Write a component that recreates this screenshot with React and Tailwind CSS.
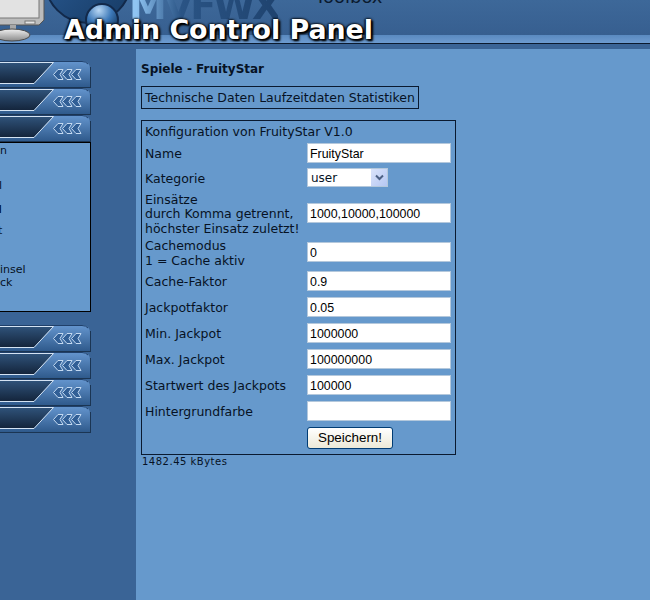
import React from 'react';

const rows = [
  { label: ['Name'], value: 'FruityStar', h: 'h-[24px]' },
  { label: ['Kategorie'], select: true, h: 'h-[25px]' },
  { label: ['Einsätze', 'durch Komma getrennt,', 'höchster Einsatz zuletzt!'], value: '1000,10000,100000', h: 'h-[46px]' },
  { label: ['Cachemodus', '1 = Cache aktiv'], value: '0', h: 'h-[32px]' },
  { label: ['Cache-Faktor'], value: '0.9', h: 'h-[26px]' },
  { label: ['Jackpotfaktor'], value: '0.05', h: 'h-[26px]' },
  { label: ['Min. Jackpot'], value: '1000000', h: 'h-[26px]' },
  { label: ['Max. Jackpot'], value: '100000000', h: 'h-[26px]' },
  { label: ['Startwert des Jackpots'], value: '100000', h: 'h-[26px]' },
  { label: ['Hintergrundfarbe'], value: '', h: 'h-[26px]' },
];

const Tab = () => (
  <svg width="91" height="27" viewBox="0 0 91 27" className="block">
    <defs>
      <linearGradient id="tabBody" x1="0" y1="0" x2="0" y2="1">
        <stop offset="0" stopColor="#6596cf" />
        <stop offset="1" stopColor="#2f5a8c" />
      </linearGradient>
      <linearGradient id="tabDark" x1="0" y1="0" x2="0" y2="1">
        <stop offset="0" stopColor="#2f5279" />
        <stop offset="1" stopColor="#14253c" />
      </linearGradient>
    </defs>
    <path d="M0 0H83Q90 1 90 8V26H0Z" fill="url(#tabBody)" />
    <path d="M0 0.5H82Q86 0.5 88 3" fill="none" stroke="#20406a" />
    <path d="M0 2H53L34 22H0Z" fill="url(#tabDark)" />
    <path d="M0 1.5H53.5L34 22.5H0" fill="none" stroke="#d4e3f3" />
    <path d="M0 26.5H91M90.5 6V27" stroke="#1b3553" />
    <g fill="#315f96" stroke="#c4daf2">
      <path d="M58 8.5H63L60 13.5L63 18.5H58L53.5 13.5Z" />
      <path d="M67 8.5H72L69 13.5L72 18.5H67L62.5 13.5Z" />
      <path d="M76 8.5H81L78 13.5L81 18.5H76L71.5 13.5Z" />
    </g>
  </svg>
);

const Logo = () => (
  <svg width="130" height="44" viewBox="0 0 130 44" className="block">
    <defs>
      <linearGradient id="big" x1="0" y1="0" x2="1" y2="1">
        <stop offset="0" stopColor="#2d5f9a" />
        <stop offset="1" stopColor="#163a63" />
      </linearGradient>
      <radialGradient id="small" cx="0.4" cy="0.2" r="0.8">
        <stop offset="0" stopColor="#b7d6f3" />
        <stop offset="0.5" stopColor="#3c78b8" />
        <stop offset="1" stopColor="#123256" />
      </radialGradient>
      <linearGradient id="stand" x1="0" y1="0" x2="0" y2="1">
        <stop offset="0" stopColor="#f1f1f1" />
        <stop offset="1" stopColor="#8a8a8a" />
      </linearGradient>
    </defs>
    <circle cx="88" cy="-20" r="43" fill="url(#big)" stroke="#12294a" strokeWidth="2" />
    <circle cx="102" cy="20" r="16" fill="url(#small)" stroke="#12294a" strokeWidth="2" />
    <path d="M-2 -2H44V20L39 25H-2Z" fill="#bcbcbc" stroke="#555" />
    <rect x="-2" y="-2" width="41" height="20" fill="#e2e2e2" stroke="#777" />
    <rect x="25" y="21" width="10" height="3" fill="#e5e5e5" stroke="#777" />
    <rect x="10" y="25" width="6" height="8" fill="#a8a8a8" />
    <ellipse cx="12" cy="35" rx="18" ry="6" fill="url(#stand)" stroke="#4a4a4a" />
  </svg>
);

export default function App() {
  return (
    <div className="w-[650px] h-[600px] overflow-hidden flex flex-col bg-[#3a6496] text-[#061224] font-['DejaVu_Sans',sans-serif] text-[12.5px]">
      {/* header */}
      <div className="relative h-[49px] shrink-0 bg-[#3a6496] overflow-hidden">
        <div className="h-[35px] bg-gradient-to-b from-[#3d6899] to-[#375f90]" />
        <div className="h-[8px] bg-gradient-to-b from-[#5a8ac0] to-[#6d9bd0]" />
        <div className="h-px bg-[#0b1a2e]" />
        <div className="absolute left-0 top-0"><Logo /></div>
        <div className="absolute left-[129px] top-[-13px] font-bold text-[38px] leading-[38px] tracking-[-3px] text-transparent bg-clip-text bg-gradient-to-r from-[#8fc4f2] from-[5%] via-[#2a5485] via-[35%] to-[#1f436f]">MVFWX</div>
        <div className="absolute left-[315px] top-[-12px] text-[18px] leading-[18px] text-[#0b1a2e]">Toolbox</div>
        <div className="absolute left-[64px] top-[14px] font-bold text-[26.8px] leading-[32px] text-white [text-shadow:0_0_3px_#000,1px_1px_3px_#000,2px_2px_2px_#000,-1px_0_2px_#000]">Admin Control Panel</div>
      </div>

      <div className="flex flex-1 min-h-0">
        {/* sidebar */}
        <div className="w-[136px] shrink-0 pt-[12px] overflow-hidden">
          <Tab />
          <Tab />
          <Tab />
          <div className="w-[91px] h-[170px] border border-black border-l-0 bg-[#6699cc] overflow-hidden text-[11px] leading-[13px] mb-[13px]">
            <div className="mt-[1px]">n</div>
            <div className="mt-[22px] -ml-[1px]">l</div>
            <div className="mt-[11px] -ml-[2px] font-bold">l</div>
            <div className="mt-[8px] -ml-[2px]">t</div>
            <div className="mt-[26px]">insel</div>
            <div>ck</div>
          </div>
          <Tab />
          <Tab />
          <Tab />
          <Tab />
        </div>

        {/* content */}
        <div className="flex-1 bg-[#6699cc] pl-[5px]">
          <div className="font-bold text-[12px] mt-[14px] leading-[13px]">Spiele - FruityStar</div>
          <div className="mt-[10px] w-fit h-[23px] border border-[#0a1a30] px-[3px] leading-[21px]">
            Technische Daten Laufzeitdaten Statistiken
          </div>
          <div className="mt-[11px] w-[315px] h-[335px] border border-[#0a1a30] pl-[3px]">
            <div className="h-[20px] leading-[21px]">Konfiguration von FruityStar V1.0</div>
            {rows.map((row) => (
              <div key={row.label[0]} className={`flex items-center ${row.h}`}>
                <div className="w-[162px] shrink-0 leading-[14.5px] whitespace-nowrap pt-[3px]">
                  {row.label.map((line) => (
                    <div key={line}>{line}</div>
                  ))}
                </div>
                {row.select ? (
                  <div className="relative w-[81px] h-[19px] bg-white border border-[#b4c8dc] flex items-center pl-[3px] text-[12px]">
                    user
                    <div className="absolute right-0 top-0 w-[16px] h-[17px] bg-gradient-to-br from-[#dbe4fb] to-[#b5c7f2] flex items-center justify-center">
                      <svg width="9" height="7" viewBox="0 0 9 7">
                        <path d="M1 1.5L4.5 5L8 1.5" fill="none" stroke="#4d6185" strokeWidth="2" />
                      </svg>
                    </div>
                  </div>
                ) : (
                  <input
                    readOnly
                    value={row.value}
                    className="w-[144px] h-[20px] bg-white border border-[#b4c8dc] px-[2px] pt-[1px] font-['Liberation_Sans',sans-serif] text-[12.4px] text-black outline-none"
                  />
                )}
              </div>
            ))}
            <div className="flex items-center h-[28px]">
              <div className="w-[162px] shrink-0" />
              <button className="w-[86px] h-[22px] rounded-[3px] border border-[#003c74] bg-gradient-to-b from-white to-[#ece9d8] font-['Liberation_Sans',sans-serif] text-[13.4px] text-black">
                Speichern!
              </button>
            </div>
          </div>
          <div className="mt-[1px] pl-[1px] text-[10px] leading-[11px] tracking-[0.5px]">1482.45 kBytes</div>
        </div>
      </div>
    </div>
  );
}
